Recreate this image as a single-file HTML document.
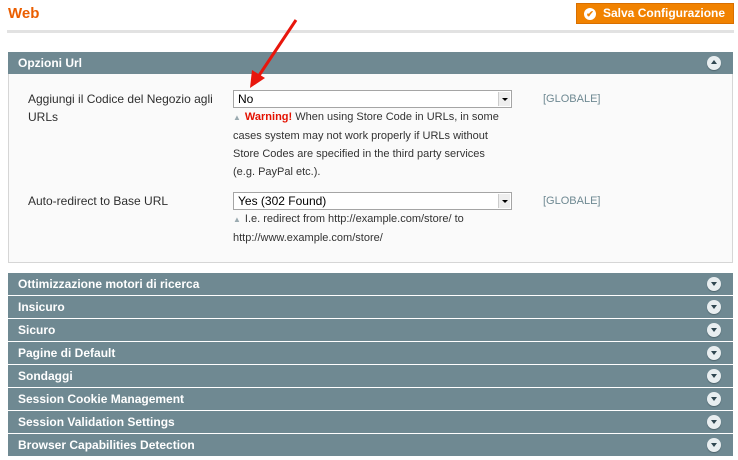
<!DOCTYPE html>
<html><head><style>
*{margin:0;padding:0;box-sizing:border-box}
body{width:738px;height:460px;background:#fff;font-family:"Liberation Sans",Arial,sans-serif;position:relative;overflow:hidden;color:#2f2f2f}
.abs{position:absolute}
.title{left:8px;top:5px;font-size:15px;font-weight:bold;color:#eb5e00}
.btn{left:576px;top:3px;width:158px;height:21px;background:#f18200;border:1px solid #d86f00;color:#fff;font-weight:bold;font-size:12px;line-height:19px;padding-left:26px}
.btn i{position:absolute;left:7px;top:4px;width:12px;height:12px;border-radius:50%;background:#fff;color:#f18200;font-size:9px;line-height:12px;text-align:center;font-style:normal}
.hl{left:7px;top:30px;width:727px;height:3px;background:#e2e2e2}
.hdr{left:8px;width:725px;height:22px;background:#6f8992;color:#fff;font-weight:bold;font-size:12px;line-height:22px;padding-left:10px}
.ic{position:absolute;right:12px;top:4px;width:14px;height:14px;border-radius:50%;background:#e8eef0;box-shadow:0 1px 1px #4f666e}
.ic:after{content:"";position:absolute;left:4px;top:5px;border-left:3px solid transparent;border-right:3px solid transparent;border-top:4px solid #2f4650}
.ic.up:after{border-top:0;border-bottom:4px solid #2f4650;top:4px}
.box{left:8px;top:74px;width:725px;height:189px;background:#fafafa;border:1px solid #d6d6d6;border-top:0}
.lbl{font-size:12px;line-height:18px;left:28px}
.sel{left:233px;width:279px;height:18px;border:1px solid #a5a5a5;background:#fff;font-size:12px;line-height:16px;padding-left:4px;color:#000}
.sel b{position:absolute;right:1px;top:1px;width:12px;height:14px;background:#eee;border-left:1px solid #ccc}
.sel b:after{content:"";position:absolute;left:3px;top:6px;border-left:3px solid transparent;border-right:3px solid transparent;border-top:3px solid #000}
.note{left:233px;width:272px;font-size:11px;line-height:18px;color:#333}
.note .t{color:#9aaab0;font-size:8px;margin-right:4px}
.g{left:543px;font-size:11px;color:#6f8992}
</style></head><body>
<div class="abs title">Web</div>
<div class="abs btn"><i>✔</i>Salva Configurazione</div>
<div class="abs hl"></div>
<div class="abs hdr" style="top:52px">Opzioni Url<span class="ic up"></span></div>
<div class="abs box"></div>
<div class="abs lbl" style="top:90px">Aggiungi il Codice del Negozio agli<br>URLs</div>
<div class="abs sel" style="top:90px">No<b></b></div>
<div class="abs g" style="top:93px">[GLOBALE]</div>
<div class="abs note" style="top:108px"><span class="t">▲</span><b style="color:#e41101">Warning!</b> When using Store Code in URLs, in some<br>cases system may not work properly if URLs without<br>Store Codes are specified in the third party services<br>(e.g. PayPal etc.).</div>
<div class="abs lbl" style="top:192px">Auto-redirect to Base URL</div>
<div class="abs sel" style="top:192px">Yes (302 Found)<b></b></div>
<div class="abs g" style="top:195px">[GLOBALE]</div>
<div class="abs note" style="top:210px;width:290px"><span class="t">▲</span>I.e. redirect from http://example.com/store/ to<br>http://www.example.com/store/</div>
<div class="abs hdr" style="top:273px">Ottimizzazione motori di ricerca<span class="ic"></span></div>
<div class="abs hdr" style="top:296px">Insicuro<span class="ic"></span></div>
<div class="abs hdr" style="top:319px">Sicuro<span class="ic"></span></div>
<div class="abs hdr" style="top:342px">Pagine di Default<span class="ic"></span></div>
<div class="abs hdr" style="top:365px">Sondaggi<span class="ic"></span></div>
<div class="abs hdr" style="top:388px">Session Cookie Management<span class="ic"></span></div>
<div class="abs hdr" style="top:411px">Session Validation Settings<span class="ic"></span></div>
<div class="abs hdr" style="top:434px">Browser Capabilities Detection<span class="ic"></span></div>
<svg class="abs" style="left:0;top:0" width="738" height="460"><line x1="296" y1="20" x2="258" y2="77" stroke="#e8160c" stroke-width="3"/><polygon points="250,88 252,70 265,78" fill="#e8160c"/></svg>
</body></html>
